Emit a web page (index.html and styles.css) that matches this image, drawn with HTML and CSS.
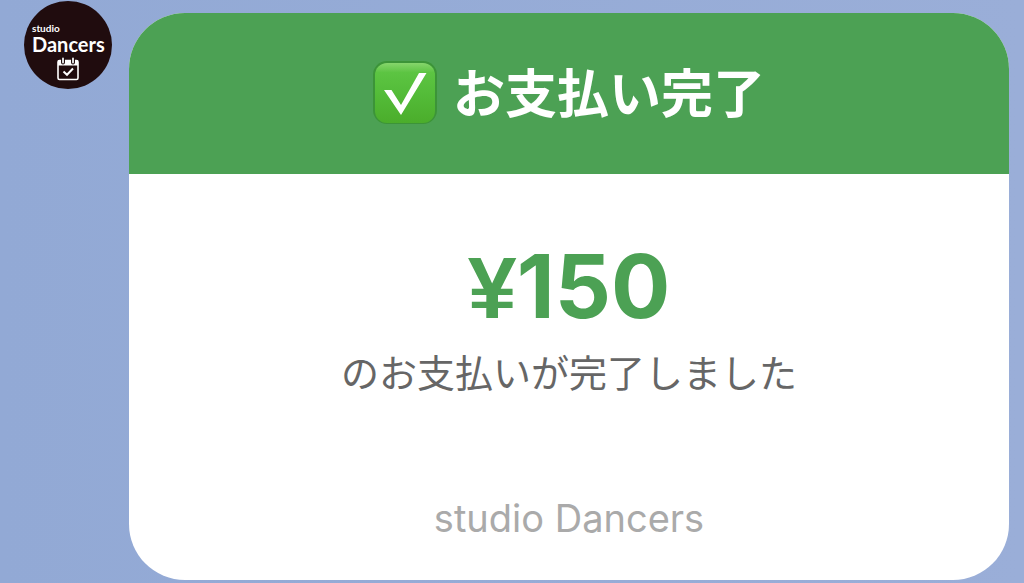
FILE: index.html
```
<!DOCTYPE html>
<html lang="ja">
<head>
  <meta charset="UTF-8">
  <meta name="viewport" content="width=device-width, initial-scale=1.0">
  <title>お支払い完了</title>
  <link rel="stylesheet" href="styles.css">
</head>
<body>
  <main class="message">
    <!-- Sender avatar -->
    <div class="avatar">
      <span class="avatar-small">studio</span>
      <span class="avatar-name">Dancers</span>
      <svg class="avatar-icon" viewBox="0 0 24 24" aria-hidden="true">
        <rect x="2" y="3.500" width="20" height="19" rx="1.500" fill="none" stroke="#fff" stroke-width="1.600"/>
        <path d="M2 3.500h20v5H2z" fill="#fff"/>
        <path d="M7 1.500v4M17 1.500v4" stroke="#200c0e" stroke-width="4" stroke-linecap="round"/>
        <path d="M7 1.500v4M17 1.500v4" stroke="#ddd" stroke-width="2" stroke-linecap="round"/>
        <path d="M7.500 14.500l3.500 3.300 6-6.300" fill="none" stroke="#fff" stroke-width="2"/>
      </svg>
    </div>

    <!-- Payment card -->
    <article class="card">
      <header class="card-header">
        <svg class="check" viewBox="0 0 64 64" aria-hidden="true">
          <defs>
            <linearGradient id="face" x1="0" y1="0" x2="0" y2="1">
              <stop offset="0" stop-color="#86d56c"/>
              <stop offset="0.160" stop-color="#5cc442"/>
              <stop offset="0.550" stop-color="#53bb38"/>
              <stop offset="1" stop-color="#4bad2b"/>
            </linearGradient>
          </defs>
          <rect x="0" y="0" width="64" height="63" rx="14" fill="#3c9438"/>
          <rect x="2" y="2" width="60" height="60" rx="12" fill="url(#face)"/>
          <path d="M11 29h7.500L28 44 46 12h7.500L28 54z" fill="#fff"/>
        </svg>
        <h1 class="card-title">お支払い完了</h1>
      </header>
      <div class="card-body">
        <p class="amount"><span class="yen">¥</span>150</p>
        <p class="note">のお支払いが完了しました</p>
      </div>
      <footer class="card-footer">studio Dancers</footer>
    </article>
  </main>
</body>
</html>
```
FILE: styles.css
```
* {
  box-sizing: border-box;
}
body {
  margin: 0;
  min-height: 100vh;
  background: linear-gradient(90deg, #92a9d5, #9aaed8);
  font-family: Inter, "Noto Sans CJK JP", sans-serif;
}
h1, p {
  margin: 0;
}
.message {
  display: flex;
  align-items: flex-start;
  gap: 17px;
  padding: 1px 15px 4px 24px;
}
.avatar {
  display: flex;
  flex-direction: column;
  flex: none;
  width: 88px;
  height: 88px;
  padding: 21px 8px 0;
  border-radius: 50%;
  background: #200c0e;
  color: #fff;
  font-family: Lato, sans-serif;
  font-weight: 700;
}
.avatar-small {
  font-size: 10px;
  line-height: 12px;
}
.avatar-name {
  font-size: 20px;
  line-height: 20px;
}
.avatar-icon {
  width: 24px;
  height: 24px;
  margin-top: 3px;
  align-self: center;
}
.card {
  flex: 1;
  margin-top: 12px;
  border-radius: 56px;
  background: #fff;
  text-align: center;
  overflow: hidden;
}
.card-header {
  display: flex;
  justify-content: center;
  align-items: center;
  gap: 16px;
  padding: 48px 0 49px;
  background: #4ca154;
}
.check {
  width: 64px;
  height: 64px;
}
.card-title {
  padding-top: 4px;
  color: #fff;
  font-size: 52px;
  line-height: 60px;
  font-weight: 700;
}
.card-body {
  padding: 64px 24px 76px;
}
.amount {
  color: #4ca154;
  font-size: 88px;
  line-height: 96px;
  font-weight: 700;
}
.yen {
  font-family: "Liberation Sans", Arial, sans-serif;
}
.note {
  margin-top: 8px;
  color: #666;
  font-size: 38px;
  line-height: 58px;
}
.card-footer {
  padding: 16px 24px 38px;
  color: #aaa;
  font-size: 38px;
  line-height: 48px;
}
```
